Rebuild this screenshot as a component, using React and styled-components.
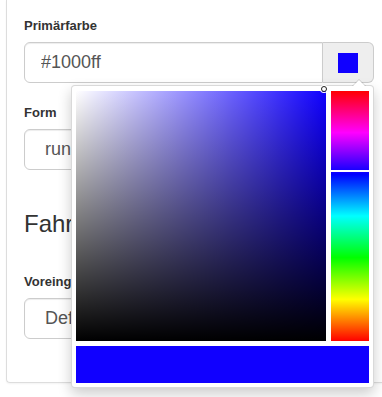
import styled, { createGlobalStyle } from "styled-components";

const GlobalStyle = createGlobalStyle`
  html, body {
    margin: 0;
    padding: 0;
    background: #fff;
  }
  body {
    font-family: "Liberation Sans", Arial, sans-serif;
    color: #333;
  }
`;

const Page = styled.div`
  min-height: 397px;
  padding-left: 6px;
`;

const Card = styled.div`
  width: 376px;
  box-sizing: border-box;
  border: 1px solid #ddd;
  border-top: none;
  border-right: none;
  border-radius: 0 0 0 4px;
  padding: 16px 8px 43px 17px;
  box-shadow: 0 1px 2px rgba(0, 0, 0, 0.05);
`;

const FormGroup = styled.div`
  margin-bottom: ${(p) => (p.last ? "0" : "20px")};
`;

const Label = styled.div`
  font-size: 13px;
  font-weight: bold;
  line-height: 20px;
  margin-bottom: 6px;
  color: #333;
`;

const InputGroup = styled.div`
  position: relative;
  display: flex;
  height: 41px;
`;

const TextInput = styled.input`
  flex: 1;
  min-width: 0;
  height: 41px;
  box-sizing: border-box;
  border: 1px solid #ccc;
  border-radius: ${(p) => (p.grouped ? "6px 0 0 6px" : "6px")};
  padding: 0 ${(p) => (p.grouped ? "16px" : "20px")};
  font-family: "Liberation Sans", Arial, sans-serif;
  font-size: 18px;
  color: #555;
  background: #fff;
  outline: none;
  box-shadow: inset 0 1px 1px rgba(0, 0, 0, 0.075);
`;

const Addon = styled.div`
  width: 51px;
  box-sizing: border-box;
  border: 1px solid #ccc;
  border-left: none;
  border-radius: 0 6px 6px 0;
  background: #eee;
  display: flex;
  align-items: center;
  justify-content: center;
`;

const Swatch = styled.div`
  width: 20px;
  height: 20px;
  background: ${(p) => p.color};
`;

const Heading = styled.h3`
  font-size: 24px;
  font-weight: normal;
  line-height: 1.1;
  margin: 41px 0 35px;
  color: #333;
`;

const Popover = styled.div`
  position: absolute;
  top: calc(100% + 2px);
  left: 47px;
  z-index: 10;
  width: 303px;
  box-sizing: border-box;
  padding: 5px 4px 4px 4px;
  background: #fff;
  border: 1px solid rgba(0, 0, 0, 0.15);
  border-radius: 4px;
  box-shadow: 0 6px 14px rgba(0, 0, 0, 0.2);
  display: grid;
  grid-template-columns: 250px 38px;
  grid-template-rows: 250px 37px;
  column-gap: 5px;
  row-gap: 5px;

  &::before {
    content: "";
    position: absolute;
    top: -7px;
    left: 280px;
    border-left: 7px solid transparent;
    border-right: 7px solid transparent;
    border-bottom: 7px solid rgba(0, 0, 0, 0.15);
  }
  &::after {
    content: "";
    position: absolute;
    top: -6px;
    left: 281px;
    border-left: 6px solid transparent;
    border-right: 6px solid transparent;
    border-bottom: 6px solid #fff;
  }
`;

const Saturation = styled.div`
  position: relative;
  background: linear-gradient(to top, #000, rgba(0, 0, 0, 0)),
    linear-gradient(to right, #fff, rgba(255, 255, 255, 0)),
    ${(p) => p.hue};
`;

const SatHandle = styled.div`
  position: absolute;
  left: calc(100% - 5px);
  top: -5px;
  width: 4px;
  height: 4px;
  border: 1px solid #222;
  border-radius: 50%;
  box-shadow: 0 0 0 1px #fff;
`;

const HueStrip = styled.div`
  position: relative;
  background: linear-gradient(
    to bottom,
    #f00 0%,
    #f0f 16.66%,
    #00f 33.33%,
    #0ff 50%,
    #0f0 66.66%,
    #ff0 83.33%,
    #f00 100%
  );
`;

const HueHandle = styled.div`
  position: absolute;
  left: 0;
  right: 0;
  top: ${(p) => p.pos}px;
  height: 2px;
  background: #fff;
`;

const Preview = styled.div`
  grid-column: 1 / span 2;
  background: ${(p) => p.color};
`;

export default function App() {
  const color = "#1000ff";
  return (
    <Page>
      <GlobalStyle />
      <Card>
        <FormGroup>
          <Label>Primärfarbe</Label>
          <InputGroup>
            <TextInput grouped readOnly value={color} />
            <Addon>
              <Swatch color={color} />
            </Addon>
            <Popover>
              <Saturation hue={color}>
                <SatHandle />
              </Saturation>
              <HueStrip>
                <HueHandle pos={79} />
              </HueStrip>
              <Preview color={color} />
            </Popover>
          </InputGroup>
        </FormGroup>
        <FormGroup>
          <Label>Form</Label>
          <InputGroup>
            <TextInput readOnly value="rund" />
          </InputGroup>
        </FormGroup>
        <Heading>Fahrzeug</Heading>
        <FormGroup last>
          <Label>Voreingestellt</Label>
          <InputGroup>
            <TextInput readOnly value="Default" />
          </InputGroup>
        </FormGroup>
      </Card>
    </Page>
  );
}
